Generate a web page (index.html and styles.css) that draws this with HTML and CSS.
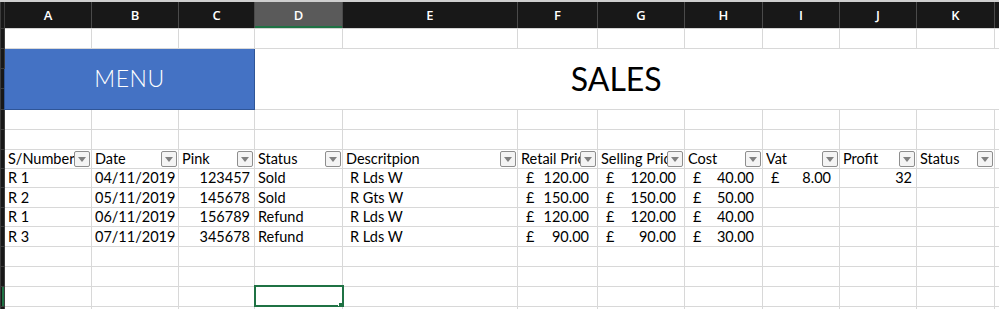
FILE: index.html
```html
<!DOCTYPE html>
<html lang="en">
<head>
    <meta charset="UTF-8">
    <meta name="viewport" content="width=device-width, initial-scale=1.0">
    <title>Sales</title>
    <link rel="stylesheet" href="styles.css">
</head>
<body>
    <div class="topbar"></div>
    <table class="sheet">
        <colgroup>
            <col class="w-rh">
            <col class="w-87"><col class="w-87"><col class="w-76"><col class="w-88">
            <col class="w-175"><col class="w-80"><col class="w-87"><col class="w-78">
            <col class="w-77"><col class="w-77"><col class="w-78"><col class="w-80">
        </colgroup>
        <thead>
            <tr>
                <th class="rh"></th>
                <th>A</th><th>B</th><th>C</th><th class="active">D</th><th>E</th><th>F</th>
                <th>G</th><th>H</th><th>I</th><th>J</th><th>K</th><th></th>
            </tr>
        </thead>
        <tbody>
            <tr>
                <td class="rh"></td>
                <td></td><td></td><td></td><td></td><td></td><td></td><td></td><td></td><td></td><td></td><td></td><td></td>
            </tr>
            <tr>
                <td class="rh"></td>
                <td class="menu" colspan="3" rowspan="3">MENU</td>
                <td class="title" colspan="9" rowspan="3">SALES</td>
            </tr>
            <tr><td class="rh"></td></tr>
            <tr class="h21"><td class="rh"></td></tr>
            <tr>
                <td class="rh"></td>
                <td></td><td></td><td></td><td></td><td></td><td></td><td></td><td></td><td></td><td></td><td></td><td></td>
            </tr>
            <tr>
                <td class="rh"></td>
                <td></td><td></td><td></td><td></td><td></td><td></td><td></td><td></td><td></td><td></td><td></td><td></td>
            </tr>
            <tr class="h19">
                <td class="rh"></td>
                <td><div class="hd"><span class="label">S/Number</span><span class="filter"></span></div></td>
                <td><div class="hd"><span class="label">Date</span><span class="filter"></span></div></td>
                <td><div class="hd"><span class="label">Pink</span><span class="filter"></span></div></td>
                <td><div class="hd"><span class="label">Status</span><span class="filter"></span></div></td>
                <td><div class="hd"><span class="label">Descritpion</span><span class="filter"></span></div></td>
                <td><div class="hd"><span class="label">Retail Price</span><span class="filter"></span></div></td>
                <td><div class="hd"><span class="label">Selling Price</span><span class="filter"></span></div></td>
                <td><div class="hd"><span class="label">Cost</span><span class="filter"></span></div></td>
                <td><div class="hd"><span class="label">Vat</span><span class="filter"></span></div></td>
                <td><div class="hd"><span class="label">Profit</span><span class="filter"></span></div></td>
                <td><div class="hd"><span class="label">Status</span><span class="filter"></span></div></td>
                <td></td>
            </tr>
            <tr class="h19">
                <td class="rh"></td>
                <td>R 1</td>
                <td class="num">04/11/2019</td>
                <td class="num">123457</td>
                <td>Sold</td>
                <td class="desc">R Lds W</td>
                <td><div class="acc"><span>£</span><span>120.00</span></div></td>
                <td><div class="acc"><span>£</span><span>120.00</span></div></td>
                <td><div class="acc"><span>£</span><span>40.00</span></div></td>
                <td><div class="acc"><span>£</span><span>8.00</span></div></td>
                <td class="num">32</td>
                <td></td><td></td>
            </tr>
            <tr>
                <td class="rh"></td>
                <td>R 2</td>
                <td class="num">05/11/2019</td>
                <td class="num">145678</td>
                <td>Sold</td>
                <td class="desc">R Gts W</td>
                <td><div class="acc"><span>£</span><span>150.00</span></div></td>
                <td><div class="acc"><span>£</span><span>150.00</span></div></td>
                <td><div class="acc"><span>£</span><span>50.00</span></div></td>
                <td></td><td></td><td></td><td></td>
            </tr>
            <tr class="h19">
                <td class="rh"></td>
                <td>R 1</td>
                <td class="num">06/11/2019</td>
                <td class="num">156789</td>
                <td>Refund</td>
                <td class="desc">R Lds W</td>
                <td><div class="acc"><span>£</span><span>120.00</span></div></td>
                <td><div class="acc"><span>£</span><span>120.00</span></div></td>
                <td><div class="acc"><span>£</span><span>40.00</span></div></td>
                <td></td><td></td><td></td><td></td>
            </tr>
            <tr>
                <td class="rh"></td>
                <td>R 3</td>
                <td class="num">07/11/2019</td>
                <td class="num">345678</td>
                <td>Refund</td>
                <td class="desc">R Lds W</td>
                <td><div class="acc"><span>£</span><span>90.00</span></div></td>
                <td><div class="acc"><span>£</span><span>90.00</span></div></td>
                <td><div class="acc"><span>£</span><span>30.00</span></div></td>
                <td></td><td></td><td></td><td></td>
            </tr>
            <tr>
                <td class="rh"></td>
                <td></td><td></td><td></td><td></td><td></td><td></td><td></td><td></td><td></td><td></td><td></td><td></td>
            </tr>
            <tr>
                <td class="rh"></td>
                <td></td><td></td><td></td><td></td><td></td><td></td><td></td><td></td><td></td><td></td><td></td><td></td>
            </tr>
            <tr>
                <td class="rh current"></td>
                <td></td><td></td><td></td><td class="selected"></td><td></td><td></td><td></td><td></td><td></td><td></td><td></td><td></td>
            </tr>
            <tr>
                <td class="rh"></td>
                <td></td><td></td><td></td><td></td><td></td><td></td><td></td><td></td><td></td><td></td><td></td><td></td>
            </tr>
        </tbody>
    </table>
</body>
</html>
```

FILE: styles.css
```css
body {
    margin: 0;
    background: #fff;
    font-family: Lato, "Open Sans", sans-serif;
    overflow: hidden;
}
.topbar {
    height: 2px;
    background: #cfcfcf;
}
.sheet {
    border-collapse: collapse;
    table-layout: fixed;
    width: 1074px;
}
.w-rh { width: 4px; }
.w-76 { width: 76px; }
.w-77 { width: 77px; }
.w-78 { width: 78px; }
.w-80 { width: 80px; }
.w-87 { width: 87px; }
.w-88 { width: 88px; }
.w-175 { width: 175px; }

thead tr {
    height: 26px;
}
th {
    background: #181818;
    color: #fff;
    font-family: "Open Sans", sans-serif;
    font-size: 13px;
    font-weight: 600;
    border-left: 1px solid #4a4a4a;
    border-right: 1px solid #4a4a4a;
    border-bottom: 1px solid #d4d4d4;
    padding: 0;
}
th.active {
    background: #5a5a5a;
    box-shadow: inset 0 -2px 0 #1f7244;
}
tr {
    height: 20px;
}
tr.h19 { height: 19px; }
tr.h21 { height: 21px; }

td {
    border: 1px solid #d8d8d8;
    padding: 0 3px;
    font-size: 14.5px;
    color: #000;
    white-space: nowrap;
    overflow: hidden;
    line-height: 17px;
}
td.rh, th.rh {
    background: #181818;
    border-color: #3c3c3c;
    padding: 0;
}
td.rh.current {
    box-shadow: inset -2px 0 0 #1f7244;
}
.num {
    text-align: right;
    padding-right: 4px;
}
.desc {
    padding-left: 7px;
}
.acc {
    display: flex;
    justify-content: space-between;
    padding: 0 5px 0 5px;
}

.menu {
    background: #4472c4;
    border: 1px solid #2f5597;
    color: #fff;
    font-size: 23px;
    font-weight: 300;
    text-align: center;
    letter-spacing: 0.5px;
}
.title {
    border: none;
    border-bottom: 1px solid #d8d8d8;
    text-align: center;
    font-size: 32px;
    padding-right: 100px;
}

.hd {
    display: flex;
    align-items: center;
}
.label {
    flex: 1;
    min-width: 0;
    overflow: hidden;
}
.filter {
    flex: none;
    width: 14px;
    height: 14px;
    border: 1px solid #8e8e8e;
    border-radius: 2px;
    background: #f4f4f4;
    margin-right: -2px;
    position: relative;
}
.filter::after {
    content: "";
    position: absolute;
    left: 3px;
    top: 5px;
    border-left: 4px solid transparent;
    border-right: 4px solid transparent;
    border-top: 5px solid #808080;
}

td.selected {
    position: relative;
    outline: 2px solid #1f7244;
    outline-offset: -1px;
}
td.selected::after {
    content: "";
    position: absolute;
    right: -3px;
    bottom: -3px;
    width: 5px;
    height: 5px;
    background: #1f7244;
    border: 1px solid #fff;
}
```
